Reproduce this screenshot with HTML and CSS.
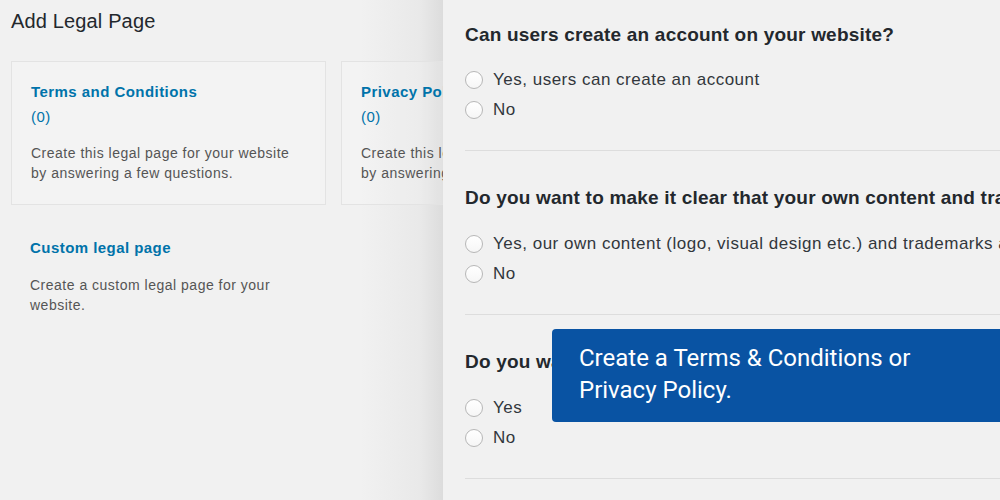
FILE: index.html
```html
<!DOCTYPE html>
<html>
<head>
<meta charset="utf-8">
<link rel="stylesheet" href="styles.css">
</head>
<body>
<div class="page">
  <main class="main">
    <h1 class="page-title">Add Legal Page</h1>
    <div class="cards">
      <div class="card">
        <a class="card-title">Terms and Conditions</a>
        <div class="card-count">(0)</div>
        <p class="card-desc">Create this legal page for your website by answering a few questions.</p>
      </div>
      <div class="card">
        <a class="card-title">Privacy Policy</a>
        <div class="card-count">(0)</div>
        <p class="card-desc">Create this legal page for your website by answering a few questions.</p>
      </div>
      <div class="card card-plain">
        <a class="card-title">Custom legal page</a>
        <p class="card-desc card-desc-tight">Create a custom legal page for your website.</p>
      </div>
    </div>
  </main>
  <aside class="panel">
    <section class="question">
      <h2 class="q-title">Can users create an account on your website?</h2>
      <div class="options">
        <label class="option"><span class="radio"></span>Yes, users can create an account</label>
        <label class="option"><span class="radio"></span>No</label>
      </div>
    </section>
    <section class="question">
      <h2 class="q-title">Do you want to make it clear that your own content and trademarks are protected?</h2>
      <div class="options">
        <label class="option"><span class="radio"></span>Yes, our own content (logo, visual design etc.) and trademarks are protected</label>
        <label class="option"><span class="radio"></span>No</label>
      </div>
    </section>
    <section class="question">
      <h2 class="q-title">Do you want to limit your liability?</h2>
      <div class="options">
        <label class="option"><span class="radio"></span>Yes</label>
        <label class="option"><span class="radio"></span>No</label>
      </div>
    </section>
    <div class="callout">Create a Terms &amp; Conditions or<br>Privacy Policy.</div>
  </aside>
</div>
</body>
</html>
```

FILE: styles.css
```css
* { box-sizing: border-box; }
html, body { margin: 0; padding: 0; }
body {
  width: 1000px;
  height: 500px;
  overflow: hidden;
  background: #f1f1f1;
  font-family: "Liberation Sans", Arial, sans-serif;
}
.page {
  display: flex;
  height: 500px;
}
.main {
  width: 443px;
  flex: 0 0 443px;
  padding: 10px 0 0 11px;
  background: linear-gradient(to right, #f1f1f1 0, #f1f1f1 360px, #e9e9e9 420px, #dcdcdc 443px);
  overflow: hidden;
}
.page-title {
  margin: 0;
  font-size: 20px;
  font-weight: 400;
  line-height: 22px;
  letter-spacing: 0.15px;
  color: #23282d;
}
.cards {
  margin-top: 29px;
  display: grid;
  grid-template-columns: 315px 315px;
  column-gap: 15px;
  row-gap: 16px;
}
.card {
  height: 144px;
  border: 1px solid #e3e3e3;
  background: rgba(255,255,255,0.15);
  padding: 19px 19px 0 19px;
}
.card-plain {
  border-color: transparent;
  background: transparent;
  padding-top: 15px;
  padding-left: 18px;
}
.card-title {
  display: block;
  font-size: 15px;
  font-weight: 700;
  line-height: 22px;
  letter-spacing: 0.45px;
  color: #0073aa;
  white-space: nowrap;
}
.card-count {
  font-size: 15px;
  line-height: 22px;
  margin-top: 3px;
  letter-spacing: 0.4px;
  color: #0073aa;
}
.card-desc {
  margin: 15px 0 0;
  font-size: 14px;
  line-height: 20px;
  letter-spacing: 0.5px;
  color: #555;
  width: 268px;
}
.card-desc-tight {
  margin-top: 16px;
  width: 260px;
}
.panel {
  position: relative;
  flex: 1;
  background: #f1f1f1;
  padding: 23px 0 0 22px;
  overflow: hidden;
}
.question {
  padding-top: 35px;
  padding-bottom: 25px;
  border-bottom: 1px solid #dddddd;
}
.question:first-child {
  padding-top: 0;
}
.question:first-child .options {
  margin-top: 18px;
}
.q-title {
  margin: 0;
  font-size: 19px;
  font-weight: 700;
  line-height: 24px;
  letter-spacing: 0.2px;
  color: #23282d;
  white-space: nowrap;
}
.options {
  margin-top: 19px;
  display: flex;
  flex-direction: column;
}
.option {
  display: flex;
  align-items: center;
  height: 30px;
  font-size: 17px;
  letter-spacing: 0.5px;
  color: #32373c;
  white-space: nowrap;
}
.radio {
  width: 18px;
  height: 18px;
  flex: 0 0 18px;
  border-radius: 50%;
  border: 1px solid #b7b7b7;
  background: linear-gradient(#ffffff, #f6f6f6);
  margin-right: 10px;
}
.callout {
  position: absolute;
  left: 109px;
  top: 329px;
  width: 460px;
  height: 93px;
  background: #0953a3;
  border-radius: 4px 0 0 4px;
  padding: 13px 0 0 27px;
  font-family: Roboto, "Liberation Sans", sans-serif;
  font-size: 24px;
  line-height: 32px;
  color: #ffffff;
}
```
